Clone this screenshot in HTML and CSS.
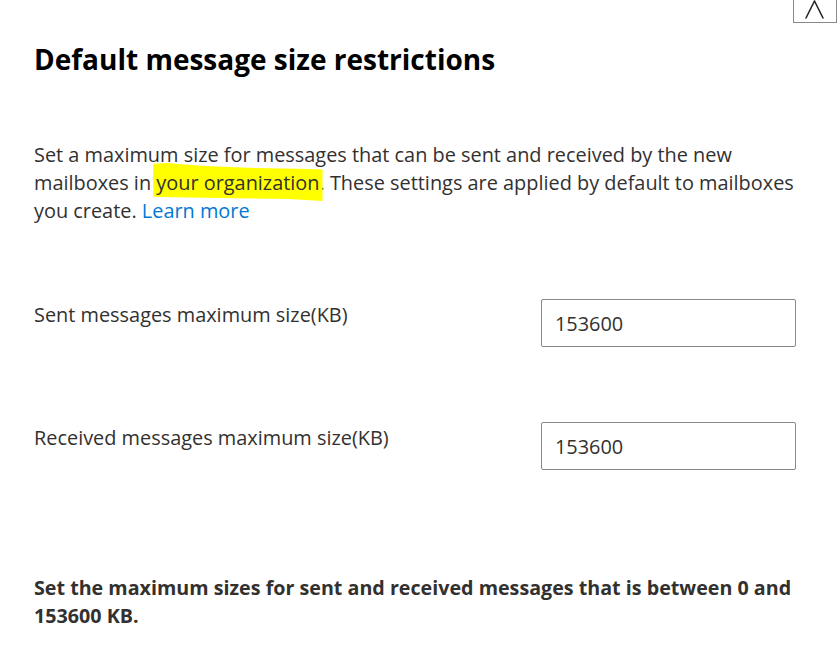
FILE: index.html
```html
<!DOCTYPE html>
<html lang="en">
<head>
<meta charset="utf-8">
<title>Default message size restrictions</title>
<link rel="stylesheet" href="styles.css">
</head>
<body>
<div class="panel">
  <div class="topbar">
    <button class="close" type="button" aria-label="Close">
      <svg width="42" height="22" viewBox="0 0 42 22" aria-hidden="true">
        <path d="M20.5 1 L12 18 M20.5 1 L29 18" stroke="#252423" stroke-width="1.6" fill="none" stroke-linecap="round"/>
      </svg>
    </button>
  </div>
  <div class="content">
    <h1 class="title">Default message size restrictions</h1>
    <p class="desc">Set a maximum size for messages that can be sent and received by the new mailboxes in <span class="hl">your organization</span>. These settings are applied by default to mailboxes you create. <a class="link" href="#">Learn more</a></p>
    <div class="field">
      <label class="label" for="sent">Sent messages maximum size(KB)</label>
      <input class="input" id="sent" type="text" value="153600">
    </div>
    <div class="field second">
      <label class="label" for="recv">Received messages maximum size(KB)</label>
      <input class="input" id="recv" type="text" value="153600">
    </div>
    <p class="note">Set the maximum sizes for sent and received messages that is between 0 and 153600 KB.</p>
  </div>
</div>
</body>
</html>
```
FILE: styles.css
```css
html, body {
  margin: 0;
  padding: 0;
  background: #ffffff;
}
body {
  font-family: "Open Sans", "Noto Sans", sans-serif;
  color: #323130;
  width: 840px;
  height: 648px;
  overflow: hidden;
}
.panel {
  display: flex;
  flex-direction: column;
}
.topbar {
  display: flex;
  justify-content: flex-end;
  height: 22px;
  padding-right: 3px;
}
.close {
  box-sizing: border-box;
  width: 44px;
  height: 23px;
  margin: 0;
  padding: 0;
  border: 1px solid #8a8886;
  border-top: none;
  background: #ffffff;
  display: flex;
  align-items: flex-start;
  justify-content: center;
}
.close svg {
  display: block;
  flex: none;
}
.content {
  padding: 0 44px 0 34px;
  display: flex;
  flex-direction: column;
}
.title {
  margin: 19px 0 0;
  font-size: 28px;
  line-height: 36px;
  font-weight: 700;
  color: #000000;
}
.desc {
  margin: 64px 0 0;
  font-size: 19.9px;
  line-height: 28px;
  color: #323130;
}
.hl {
  position: relative;
  z-index: 0;
}
.hl::before {
  content: "";
  position: absolute;
  left: -3px;
  right: -3px;
  top: -6px;
  bottom: -5px;
  background: #ffff00;
  z-index: -1;
  clip-path: polygon(0% 2%, 8% 0%, 30% 8%, 60% 13%, 85% 15%, 100% 17%, 100% 100%, 80% 95%, 50% 93%, 20% 91%, 0% 89%);
}
.link {
  color: #0078d4;
  text-decoration: none;
}
.field {
  margin-top: 74px;
  display: flex;
  justify-content: space-between;
  align-items: flex-start;
}
.field.second {
  margin-top: 75px;
}
.label {
  padding-top: 2px;
  font-size: 19.9px;
  line-height: 28px;
  color: #323130;
}
.input {
  box-sizing: border-box;
  width: 255px;
  height: 48px;
  margin: 0;
  padding: 0 13px;
  border: 1px solid #8a8886;
  border-radius: 2px;
  font-family: "Open Sans", "Noto Sans", sans-serif;
  font-size: 19.9px;
  color: #323130;
  background: #ffffff;
  outline: none;
}
.note {
  margin: 104px 0 0;
  font-size: 19.7px;
  line-height: 28px;
  font-weight: 700;
  color: #323130;
}
```
